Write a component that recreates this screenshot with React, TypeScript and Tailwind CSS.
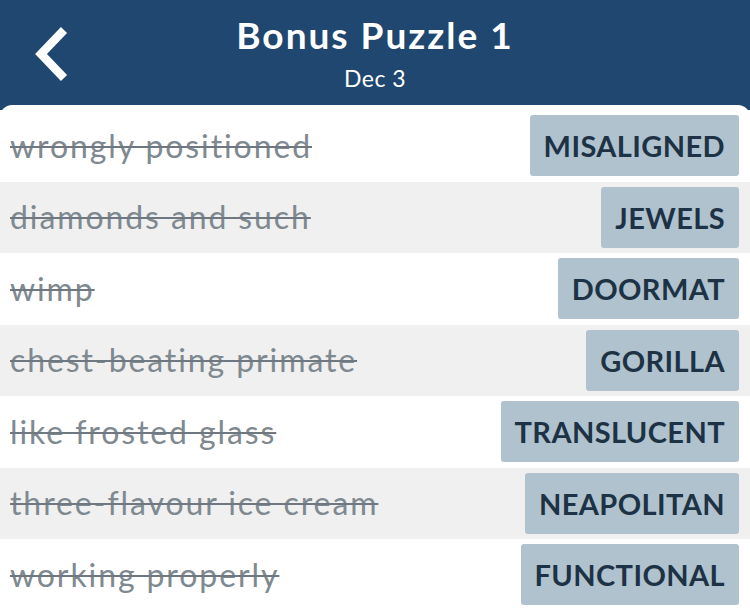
import React from "react";

const rows = [
  ["wrongly positioned", "MISALIGNED"],
  ["diamonds and such", "JEWELS"],
  ["wimp", "DOORMAT"],
  ["chest-beating primate", "GORILLA"],
  ["like frosted glass", "TRANSLUCENT"],
  ["three-flavour ice cream", "NEAPOLITAN"],
  ["working properly", "FUNCTIONAL"],
];

export default function App() {
  return (
    <div className="w-[750px] h-[608px] overflow-hidden bg-[#1f4770]" style={{ fontFamily: "Lato, 'Open Sans', sans-serif" }}>
      <div className="relative h-[105px] flex flex-col items-center text-white">
        <svg className="absolute left-[32px] top-[25px]" width="40" height="58" viewBox="0 0 40 58">
          <polyline points="32,5 9,29 32,53" fill="none" stroke="white" strokeWidth="8.5" strokeLinecap="butt" strokeLinejoin="miter" />
        </svg>
        <div className="mt-[12px] text-[37px] font-bold leading-[46px] tracking-[2px]">Bonus Puzzle 1</div>
        <div className="mt-[6px] text-[23px] leading-[28px] tracking-[0.5px]">Dec 3</div>
      </div>
      <div className="bg-white rounded-t-[12px] pt-[5px] h-[503px]">
        {rows.map(([clue, answer], i) => (
          <div key={i} className={`h-[71.5px] flex items-center justify-between pl-[10px] pr-[11px] ${i % 2 === 1 ? "bg-[#f0f0f0]" : "bg-white"}`}>
            <span className="text-[32px] text-[#7f8990] line-through decoration-[1.5px] decoration-[#6f7880] tracking-[1.9px]">{clue}</span>
            <span className="h-[61px] flex items-center px-[14px] rounded-[3px] bg-[#afc2ce] text-[#1d3244] text-[29px] font-bold tracking-[0.4px]">{answer}</span>
          </div>
        ))}
      </div>
    </div>
  );
}
